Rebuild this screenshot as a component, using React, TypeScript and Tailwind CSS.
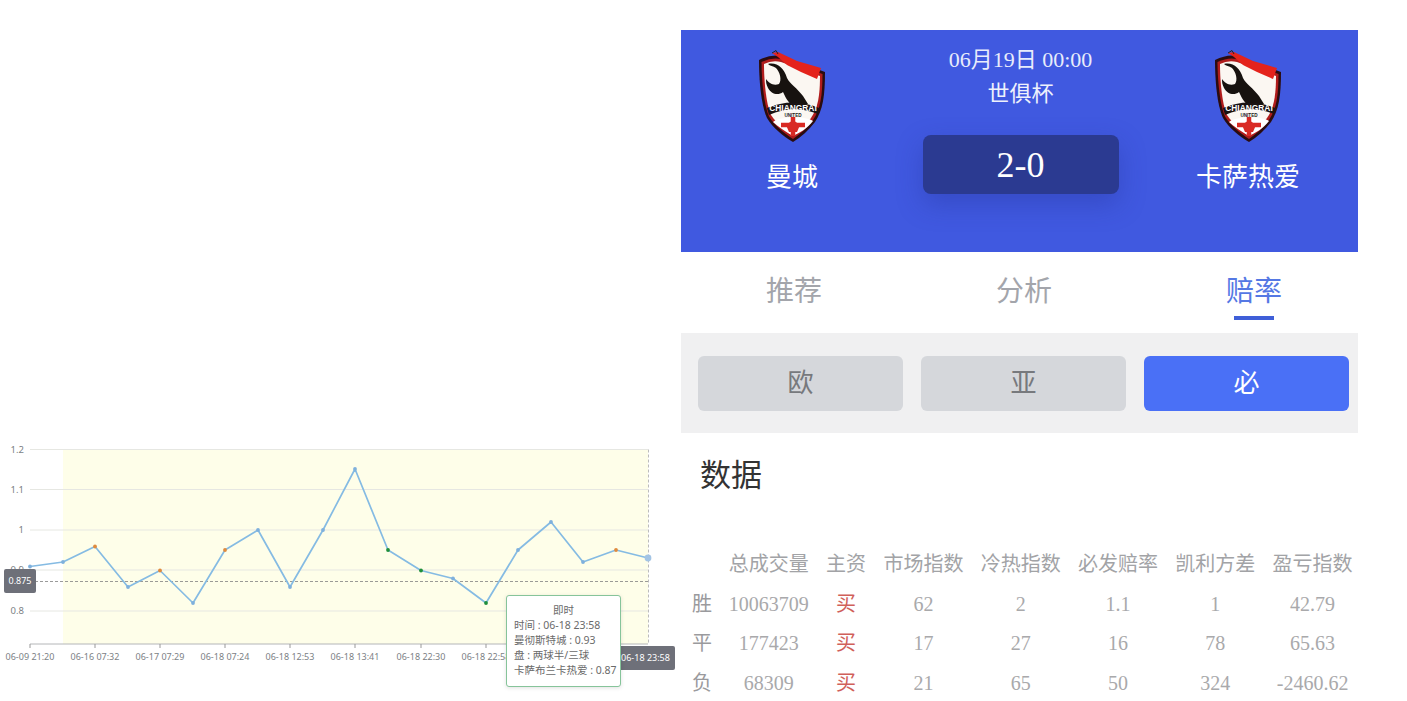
import React from "react";

const serif = '"Liberation Serif","Noto Sans CJK SC",serif';

const pts: [number, number, string][] = [
  [30, 566.5, "#7fb0dc"], [63, 562, "#7fb0dc"], [95, 546.5, "#e08a3c"], [128, 587, "#7fb0dc"],
  [160, 570.5, "#e08a3c"], [193, 603, "#7fb0dc"], [225, 550, "#e08a3c"], [258, 530, "#7fb0dc"],
  [290, 587, "#7fb0dc"], [323, 530, "#7fb0dc"], [355, 469, "#7fb0dc"], [388, 550, "#1f8f3a"],
  [421, 570.5, "#1f8f3a"], [453, 578.5, "#7fb0dc"], [486, 603, "#1f8f3a"], [518, 550, "#7fb0dc"],
  [551, 522, "#7fb0dc"], [583, 562, "#7fb0dc"], [616, 550, "#e08a3c"],
];

const xLabels: [number, string][] = [
  [30, "06-09 21:20"], [95, "06-16 07:32"], [160, "06-17 07:29"], [225, "06-18 07:24"],
  [290, "06-18 12:53"], [355, "06-18 13:41"], [421, "06-18 22:30"], [486, "06-18 22:58"],
];

function Chart() {
  const o = 430;
  const line = [...pts.map((p) => `${p[0]},${p[1] - o}`), `648,${558 - o}`].join(" ");
  return (
    <svg width="681" height="271" viewBox="0 0 681 271" className="block">
      <rect x="63" y="19.5" width="585" height="194.5" fill="#fefee9" />
      {[
        [19.5, "1.2"], [59.5, "1.1"], [100, "1"], [140, "0.9"], [181, "0.8"],
      ].map(([y, t]) => (
        <g key={t as string}>
          <line x1="30" x2="648" y1={y as number} y2={y as number} stroke="#e6e7e2" strokeWidth="1" />
          <text x="24" y={(y as number) + 3} textAnchor="end" fontSize="9.5" fill="#7c7f85" fontFamily="Noto Sans">{t}</text>
        </g>
      ))}
      <line x1="30" x2="648" y1="214" y2="214" stroke="#b4b6b8" strokeWidth="1" />
      <line x1="648.5" x2="648.5" y1="19.5" y2="214" stroke="#aaa" strokeWidth="0.8" strokeDasharray="3 2" />
      <line x1="30" x2="648" y1="151.5" y2="151.5" stroke="#808080" strokeWidth="0.8" strokeDasharray="3 2" />
      {xLabels.map(([x, t]) => (
        <g key={t}>
          <line x1={x} x2={x} y1="214" y2="218" stroke="#999" />
          <text x={x} y="230" textAnchor="middle" fontSize="9" fill="#7c7f85" fontFamily="Noto Sans">{t}</text>
        </g>
      ))}
      <polyline points={line} fill="none" stroke="#85bbe3" strokeWidth="1.7" strokeLinejoin="round" />
      {pts.map((p, i) => (
        <circle key={i} cx={p[0]} cy={p[1] - o} r="1.9" fill={p[2]} />
      ))}
      <circle cx="648" cy={558 - o} r="3.4" fill="#a3c4e4" />
    </svg>
  );
}

function Logo() {
  return (
    <svg width="70" height="93" viewBox="0 0 70 93" className="block">
      <path d="M2 10 Q14 4 24 6 L68 22 C68 45 66 60 58 72 C52 80 44 87 36 92 C26 86 16 78 10 68 C4 55 2 30 2 10Z" fill="#2a0c10" />
      <path d="M4.5 12 Q15 7 24 9 L65.5 24 C65.5 45 63.5 59 56 70 C50 78 43 84 36 89 C27 83 18 76 12 66.500 C7 55 4.500 30 4.500 12Z" fill="#b01c1c" />
      <path d="M7 14 Q15 10 24 12 L63 26 C63 45 61 58 54 68 C48 76 42 81 36 86 C28 80 20 74 14 65 C9 54 7 30 7 14Z" fill="#fbf7f2" />
      <path d="M15 3 L21 2 L40 11 L64 18 L60 29 L44 22 L30 15 L21 7Z" fill="#e4231c" />
      <path d="M15 3 L19 0.500 L21 4" fill="none" stroke="#222" strokeWidth="1" />
      <path d="M11 14 C20 12 27 18 30 28 C33 34 40 38 46 46 L51 54 L38 58 C30 52 28 46 26 42 C21 46 14 44 11 38 C9 34 9 32 9 29 C12 33 16 36 22 34 C25 30 23 22 19 18 C16 16 13 16 11 14Z" fill="#17120f" />
      <path d="M10 58 Q36 47 62 58 L61 64 Q36 54 12 65Z" fill="#1a1313" />
      <text x="36" y="60.500" textAnchor="middle" fontSize="8.400" fontWeight="700" fill="#fff" fontFamily="Liberation Sans">CHIANGRAI</text>
      <text x="36" y="66.500" textAnchor="middle" fontSize="4.600" fontWeight="700" fill="#222" fontFamily="Liberation Sans">UNITED</text>
      <path d="M16 72 C24 66 48 66 56 71 C50 79 42 83 36 86 C28 81 21 77 16 72Z" fill="#fff" />
      <path d="M36 67 L36 86 M24 75 L48 75" stroke="#d92a24" strokeWidth="4.500" />
      <path d="M36 70 L43 75 L40 82 L32 82 L29 75Z" fill="#d92a24" />
    </svg>
  );
}

const rows = [
  ["胜", "10063709", "买", "62", "2", "1.1", "1", "42.79"],
  ["平", "177423", "买", "17", "27", "16", "78", "65.63"],
  ["负", "68309", "买", "21", "65", "50", "324", "-2460.62"],
];
const heads = ["", "总成交量", "主资", "市场指数", "冷热指数", "必发赔率", "凯利方差", "盈亏指数"];

export default function App() {
  return (
    <div className="flex h-[701px] w-[1407px] overflow-hidden bg-white">
      <div className="relative flex w-[681px] shrink-0 flex-col justify-end">
        <Chart />
        <div className="absolute left-[4px] top-[569px] flex h-[24px] w-[32px] items-center justify-center rounded-[2px] bg-[#6e7079] text-[9px] text-white [font-family:'Noto_Sans']">
          0.875
        </div>
        <div className="absolute left-[616px] top-[646px] flex h-[24px] w-[59px] items-center justify-center rounded-[2px] bg-[#6e7079] text-[9px] text-white [font-family:'Noto_Sans']">
          06-18 23:58
        </div>
        <div className="absolute left-[506px] top-[595px] h-[92px] w-[115px] rounded-[3px] border border-[#86c49a] bg-white pl-[7px] pt-[7px] text-[10.500px] leading-[15px] text-[#6a6a6a] shadow-[0_1px_4px_rgba(0,0,0,0.12)] [font-family:'Noto_Sans','Noto_Sans_CJK_SC',sans-serif]">
          <div className="pr-[7px] text-center">即时</div>
          <div>时间 : 06-18 23:58</div>
          <div>曼彻斯特城 : 0.93</div>
          <div>盘 : 两球半/三球</div>
          <div className="whitespace-nowrap">卡萨布兰卡热爱 : 0.87</div>
        </div>
      </div>

      <div className="mt-[30px] w-[677px] shrink-0" style={{ fontFamily: serif }}>
        <div className="flex h-[222px] bg-[#4059e0] text-white">
          <div className="flex w-[222px] flex-col items-center pt-[20px]">
            <Logo />
            <div className="mt-[17px] text-[26px] leading-[36px]">曼城</div>
          </div>
          <div className="flex flex-1 flex-col items-center pt-[16px]">
            <div className="text-[22px] leading-[28px] text-[#e8ecfb]">06月19日 00:00</div>
            <div className="mt-[5px] text-[22px] leading-[30px] text-[#eef1fc]">世俱杯</div>
            <div className="mt-[26px] flex h-[59px] w-[196px] items-center justify-center rounded-[8px] bg-[#2b3a91] text-[36px] shadow-[0_10px_26px_rgba(35,50,150,0.35)]">
              2-0
            </div>
          </div>
          <div className="flex w-[220px] flex-col items-center pt-[20px]">
            <Logo />
            <div className="mt-[17px] text-[26px] leading-[36px]">卡萨热爱</div>
          </div>
        </div>

        <div className="flex h-[81px] justify-between pl-[85px] pr-[76px] text-[28px] text-[#a3a5ab]">
          <div className="pt-[20px] leading-[40px]">推荐</div>
          <div className="pt-[20px] leading-[40px]">分析</div>
          <div className="flex flex-col items-center pt-[20px] leading-[40px] text-[#5578e4]">
            赔率
            <div className="mt-[4px] h-[4px] w-[40px] bg-[#3f5fd8]" />
          </div>
        </div>

        <div className="flex h-[100px] gap-[18px] bg-[#f0f0f1] pl-[17px] pr-[9px] pt-[23px]">
          <div className="flex h-[55px] flex-1 items-center justify-center rounded-[6px] bg-[#d5d7db] text-[26px] text-[#77797d]">欧</div>
          <div className="flex h-[55px] flex-1 items-center justify-center rounded-[6px] bg-[#d5d7db] text-[26px] text-[#77797d]">亚</div>
          <div className="flex h-[55px] flex-1 items-center justify-center rounded-[6px] bg-[#4a70f6] text-[26px] text-white">必</div>
        </div>

        <div className="pl-[19px] pt-[22px] text-[31px] leading-[42px] text-[#333333]">数据</div>

        <div className="mt-[48px] grid grid-cols-[20px_81px_41px_81px_81px_81px_81px_81px] gap-x-[16.300px] pl-[11px] text-center text-[20px] leading-[39.500px] text-[#a9a9ab]">
          {heads.map((h, i) => (
            <div key={i} className="text-[#a2a3a6]">{h}</div>
          ))}
          {rows.map((r) =>
            r.map((c, i) => (
              <div key={r[0] + i} className={i === 2 ? "text-[#d0605a]" : i === 0 ? "text-[#9a9a9d]" : ""}>
                {c}
              </div>
            ))
          )}
        </div>
      </div>
    </div>
  );
}
